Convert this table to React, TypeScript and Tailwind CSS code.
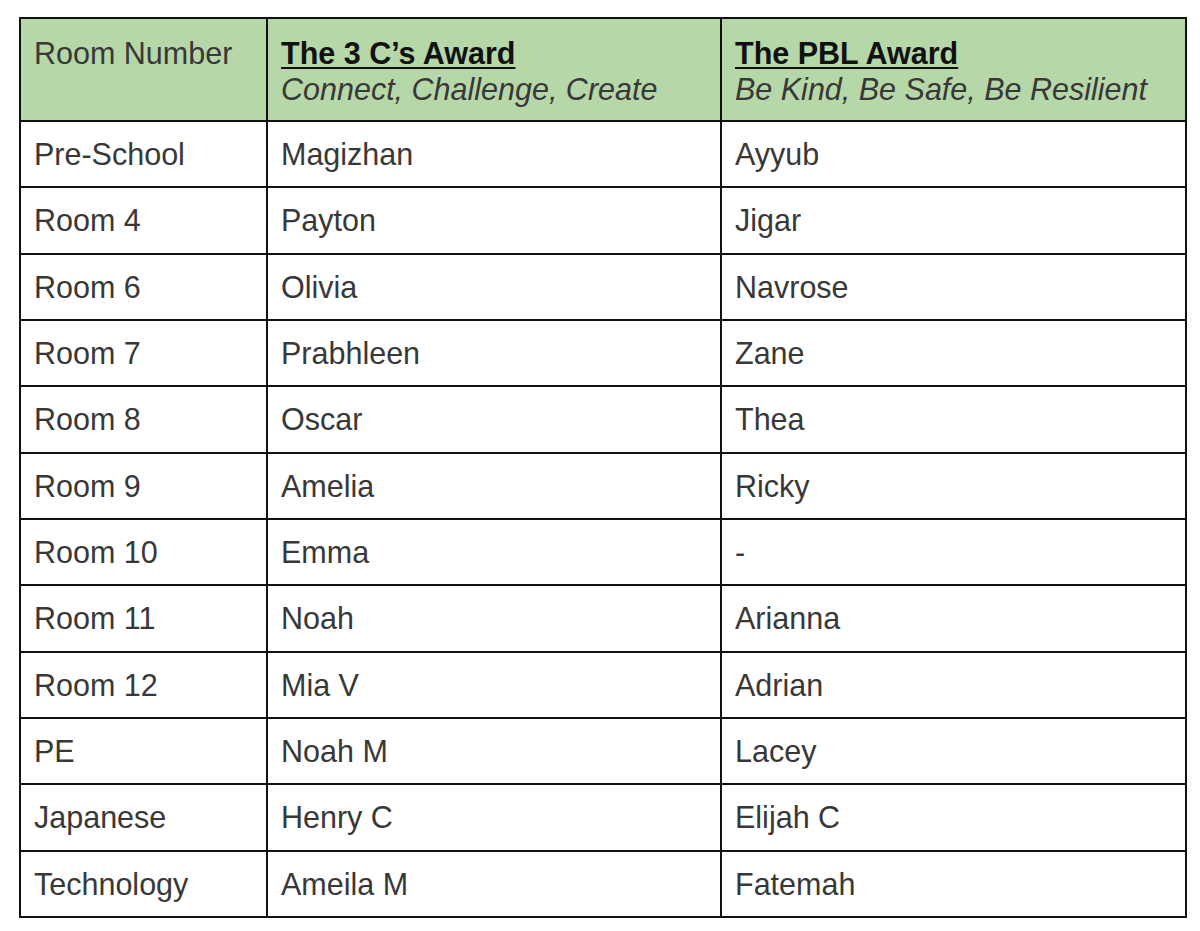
import React from "react";

const rows: [string, string, string][] = [
  ["Pre-School", "Magizhan", "Ayyub"],
  ["Room 4", "Payton", "Jigar"],
  ["Room 6", "Olivia", "Navrose"],
  ["Room 7", "Prabhleen", "Zane"],
  ["Room 8", "Oscar", "Thea"],
  ["Room 9", "Amelia", "Ricky"],
  ["Room 10", "Emma", "-"],
  ["Room 11", "Noah", "Arianna"],
  ["Room 12", "Mia V", "Adrian"],
  ["PE", "Noah M", "Lacey"],
  ["Japanese", "Henry C", "Elijah C"],
  ["Technology", "Ameila M", "Fatemah"],
];

export default function App() {
  return (
    <div
      className="w-[1200px] h-[931px] bg-white pt-[17px] pl-[19px]"
      style={{ fontFamily: '"Liberation Sans", Arial, sans-serif' }}
    >
      <table className="table-fixed border-collapse w-[1166px] text-[30.5px] leading-[36px] text-[#383838]">
        <colgroup>
          <col className="w-[247px]" />
          <col className="w-[454px]" />
          <col className="w-[465px]" />
        </colgroup>
        <thead>
          <tr className="bg-[#b6d7a8] h-[103px]">
            <th className="border-2 border-[#111] align-top text-left font-normal px-[13px] pt-[16px] pb-[13px]">
              Room Number
            </th>
            <th className="border-2 border-[#111] align-top text-left font-normal px-[13px] pt-[16px] pb-[13px]">
              <div className="font-bold underline text-[#111] decoration-2 underline-offset-[3px]">
                The 3 C’s Award
              </div>
              <div className="italic">Connect, Challenge, Create</div>
            </th>
            <th className="border-2 border-[#111] align-top text-left font-normal px-[13px] pt-[16px] pb-[13px]">
              <div className="font-bold underline text-[#111] decoration-2 underline-offset-[3px]">
                The PBL Award
              </div>
              <div className="italic">Be Kind, Be Safe, Be Resilient</div>
            </th>
          </tr>
        </thead>
        <tbody>
          {rows.map((r, i) => (
            <tr key={i} className="h-[66.33px]">
              {r.map((c, j) => (
                <td
                  key={j}
                  className="border-2 border-[#111] align-top px-[13px] pt-[14px] pb-[14px]"
                >
                  {c}
                </td>
              ))}
            </tr>
          ))}
        </tbody>
      </table>
    </div>
  );
}
